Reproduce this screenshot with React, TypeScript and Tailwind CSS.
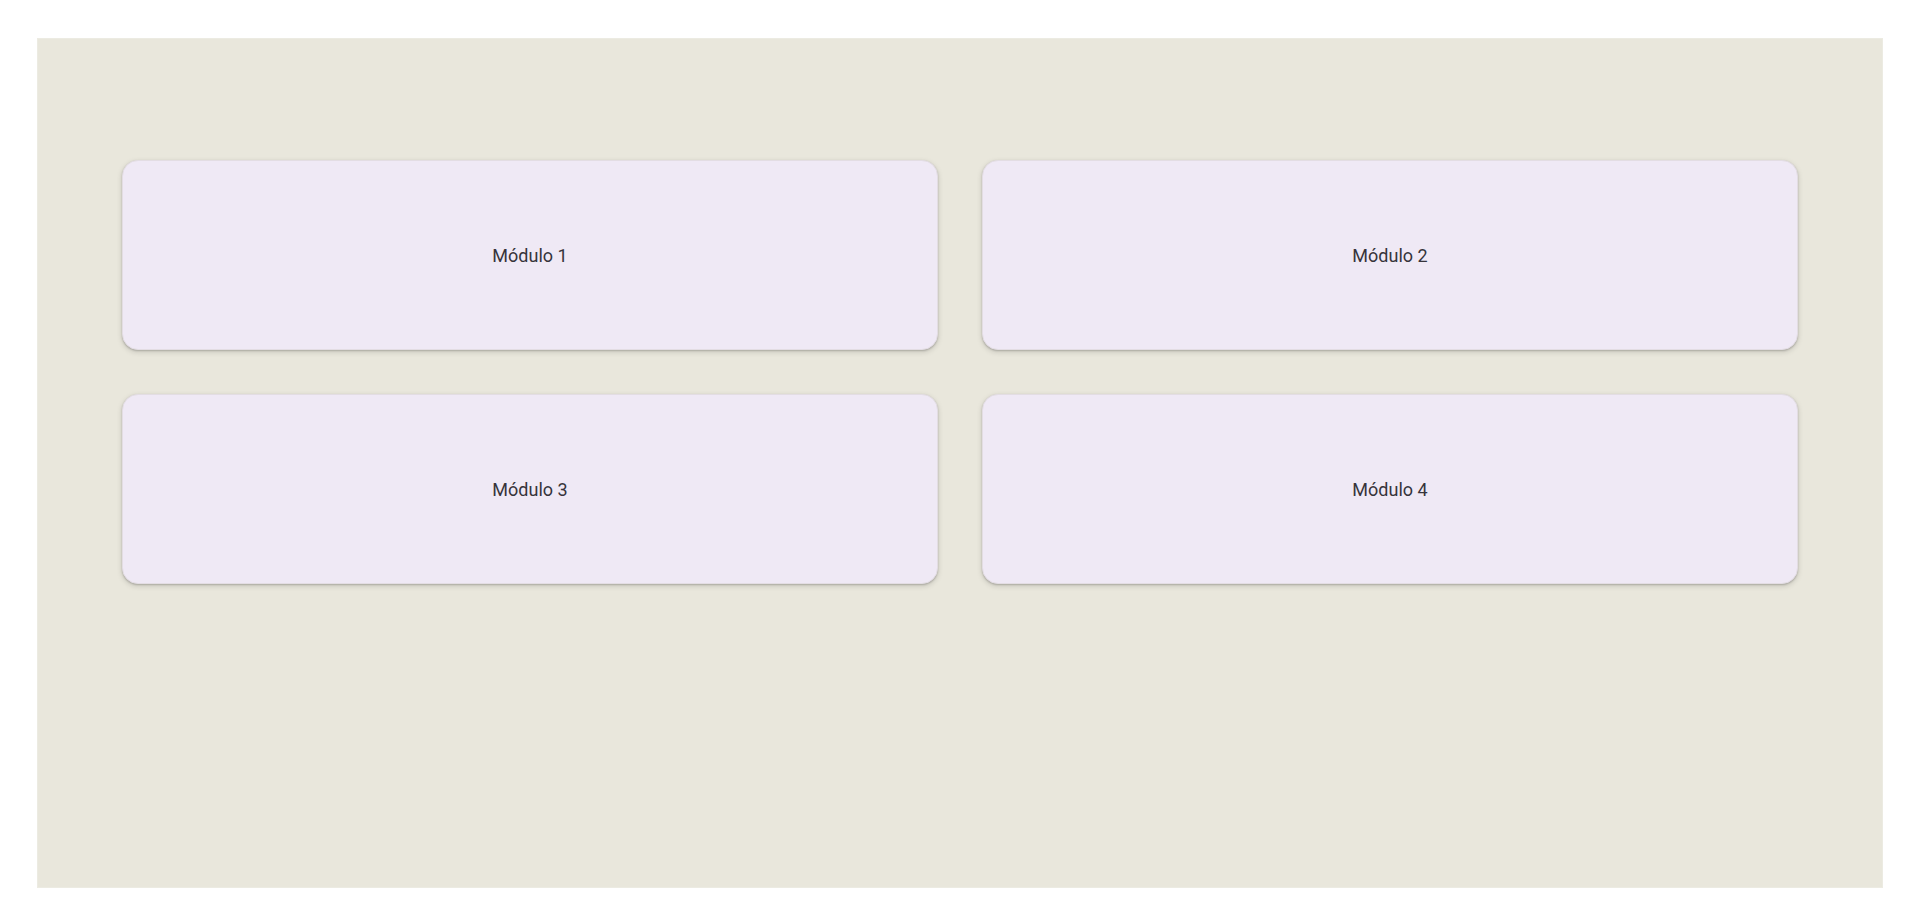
const modules = ['Módulo 1', 'Módulo 2', 'Módulo 3', 'Módulo 4'];

function ModuleCard({ label }: { label: string }) {
  return (
    <div className="h-[190px] rounded-2xl border border-[#e3dde3] bg-[#efe9f5] shadow-[0_1px_2px_rgba(0,0,0,0.2),0_2px_5px_1px_rgba(0,0,0,0.1)] flex items-center justify-center">
      <span className="text-[18px] text-[#36343b]">{label}</span>
    </div>
  );
}

export default function App() {
  return (
    <div className="w-[1920px] h-[924px] bg-white pt-[38px] pl-[37px] font-['Roboto','Liberation_Sans',sans-serif]">
      <div className="w-[1846px] h-[850px] bg-[#e9e7dc] border border-[#ecebe2] pt-[121px] px-[84px]">
        <div className="grid grid-cols-2 gap-x-[44px] gap-y-[44px]">
          {modules.map((m) => (
            <ModuleCard key={m} label={m} />
          ))}
        </div>
      </div>
    </div>
  );
}
